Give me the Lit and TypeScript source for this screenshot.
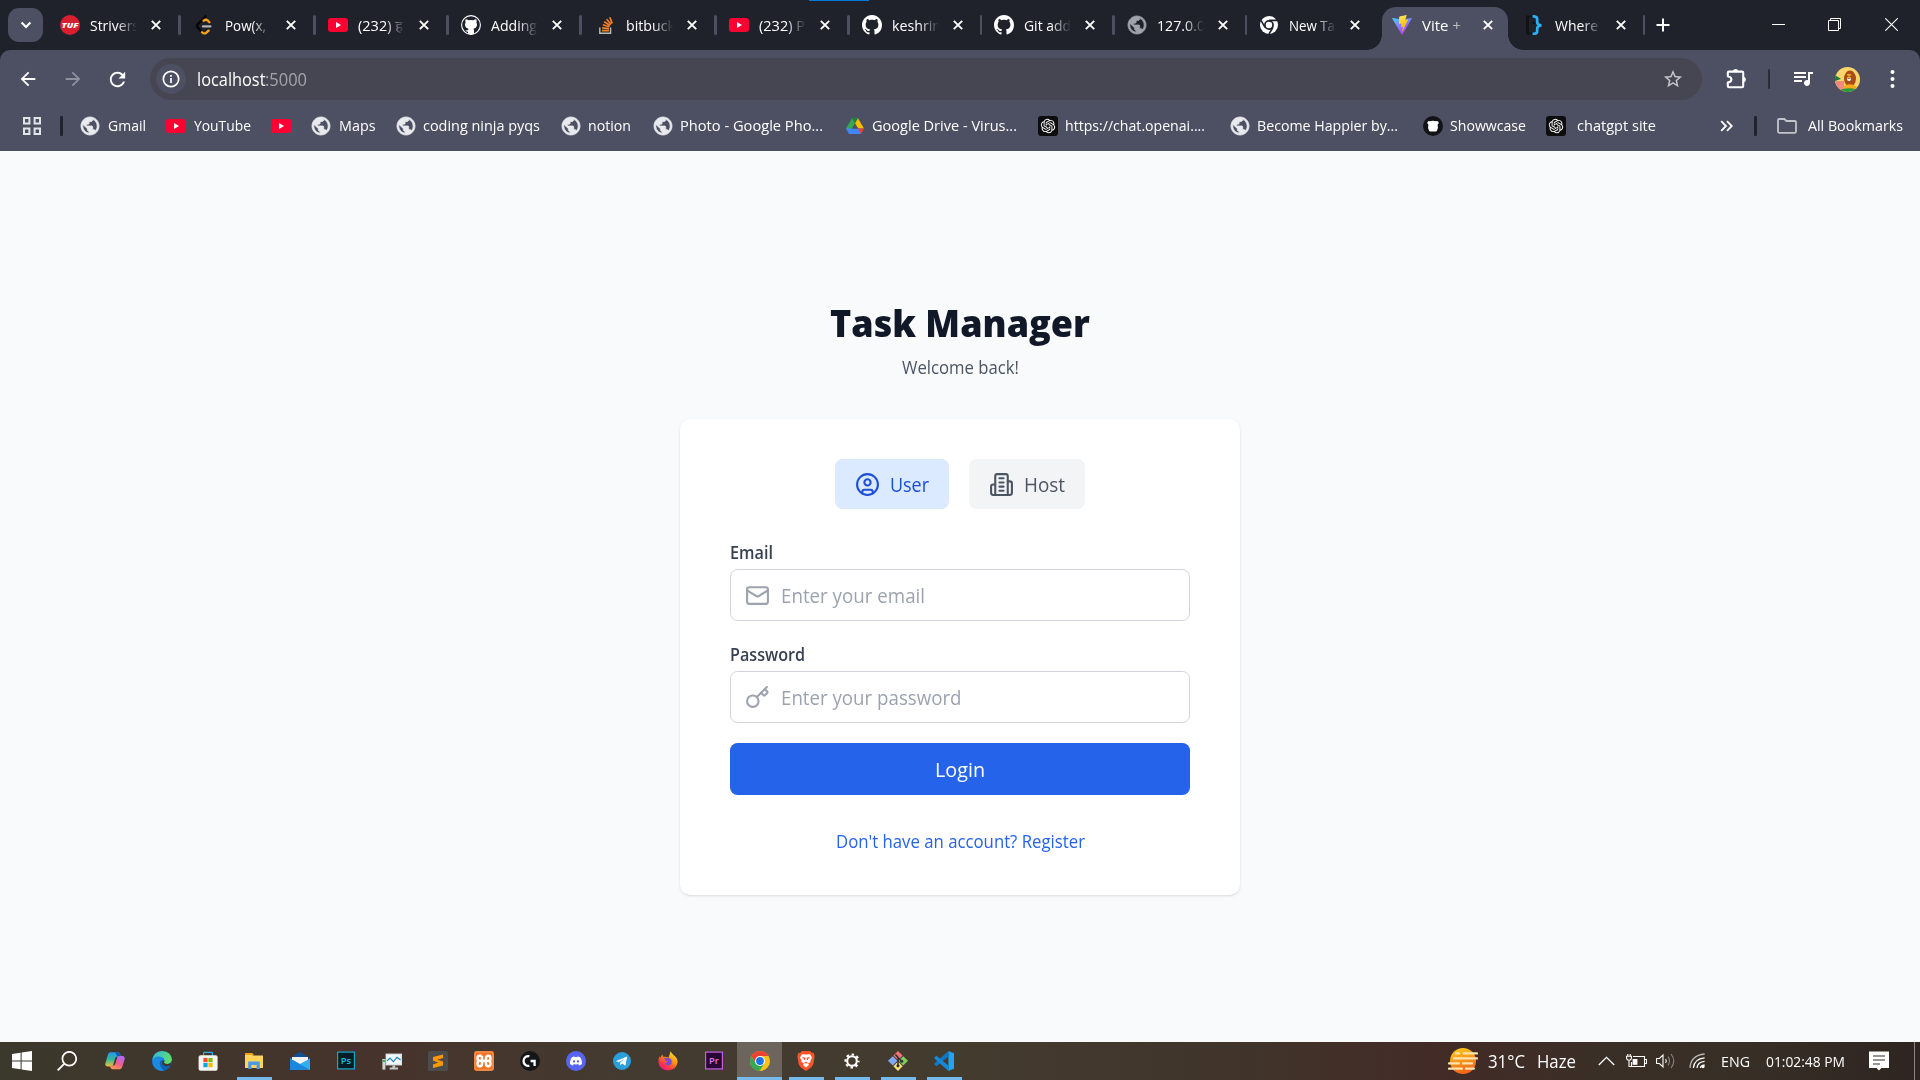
import { LitElement, html, svg, css, nothing } from "lit";
import { customElement, property, query } from "lit/decorators.js";
import { styleMap } from "lit/directives/style-map.js";
import { classMap } from "lit/directives/class-map.js";

/** One line of text condensed or widened to an exact advance width. */
@customElement("fit-text")
class FitText extends LitElement {
  @property({ type: Number }) w = 0;
  @property() text = "";
  @query("span") span!: HTMLSpanElement;

  static styles = css`
    :host { display: inline-block; white-space: pre; flex: none; }
    span { display: inline-block; transform-origin: 0 50%; }
  `;

  private fit() {
    this.span.style.transform = "none";
    const natural = this.span.getBoundingClientRect().width;
    if (natural > 0) this.span.style.transform = `scaleX(${this.w / natural})`;
  }

  updated() {
    this.style.width = `${this.w}px`;
    this.fit();
    document.fonts.ready.then(() => this.fit());
  }

  render() {
    return html`<span>${this.text}</span>`;
  }
}

const GITHUB = "M8 0C3.58 0 0 3.58 0 8c0 3.54 2.29 6.53 5.47 7.59.4.07.55-.17.55-.38 0-.19-.01-.82-.01-1.49-2.01.37-2.53-.49-2.69-.94-.09-.23-.48-.94-.82-1.13-.28-.15-.68-.52-.01-.53.63-.01 1.08.58 1.23.82.72 1.21 1.87.87 2.33.66.07-.52.28-.87.51-1.07-1.78-.2-3.64-.89-3.64-3.95 0-.87.31-1.59.82-2.15-.08-.2-.36-1.02.08-2.12 0 0 .67-.21 2.2.82.64-.18 1.32-.27 2-.27s1.36.09 2 .27c1.53-1.04 2.2-.82 2.2-.82.44 1.1.16 1.92.08 2.12.51.56.82 1.27.82 2.15 0 3.07-1.87 3.75-3.65 3.95.29.25.54.73.54 1.48 0 1.07-.01 1.93-.01 2.2 0 .21.15.46.55.38A8.01 8.01 0 0 0 16 8c0-4.42-3.58-8-8-8z";
const KNOT = "M22.2819 9.8211a5.9847 5.9847 0 0 0-.5157-4.9108 6.0462 6.0462 0 0 0-6.5098-2.9A6.0651 6.0651 0 0 0 4.9807 4.1818a5.9847 5.9847 0 0 0-3.9977 2.9 6.0462 6.0462 0 0 0 .7427 7.0966 5.98 5.98 0 0 0 .511 4.9107 6.051 6.051 0 0 0 6.5146 2.9001A5.9847 5.9847 0 0 0 13.2599 24a6.0557 6.0557 0 0 0 5.7718-4.2058 5.9894 5.9894 0 0 0 3.9977-2.9001 6.0557 6.0557 0 0 0-.7475-7.0729zm-9.022 12.6081a4.4755 4.4755 0 0 1-2.8764-1.0408l.1419-.0804 4.7783-2.7582a.7948.7948 0 0 0 .3927-.6813v-6.7369l2.02 1.1686a.071.071 0 0 1 .038.052v5.5826a4.504 4.504 0 0 1-4.4945 4.4944zm-9.6607-4.1254a4.4708 4.4708 0 0 1-.5346-3.0137l.142.0852 4.783 2.7582a.7712.7712 0 0 0 .7806 0l5.8428-3.3685v2.3324a.0804.0804 0 0 1-.0332.0615L9.74 19.9502a4.4992 4.4992 0 0 1-6.1408-1.6464zM2.3408 7.8956a4.485 4.485 0 0 1 2.3655-1.9728V11.6a.7664.7664 0 0 0 .3879.6765l5.8144 3.3543-2.0201 1.1685a.0757.0757 0 0 1-.071 0l-4.8303-2.7865A4.504 4.504 0 0 1 2.3408 7.872zm16.5963 3.8558L13.1038 8.364 15.1192 7.2a.0757.0757 0 0 1 .071 0l4.8303 2.7913a4.4944 4.4944 0 0 1-.6765 8.1042v-5.6772a.79.79 0 0 0-.407-.667zm2.0107-3.0231l-.142-.0852-4.7735-2.7818a.7759.7759 0 0 0-.7854 0L9.409 9.2297V6.8974a.0662.0662 0 0 1 .0284-.0615l4.8303-2.7866a4.4992 4.4992 0 0 1 6.6802 4.66zM8.3065 12.863l-2.02-1.1638a.0804.0804 0 0 1-.038-.0567V6.0742a4.4992 4.4992 0 0 1 7.3757-3.4537l-.142.0805L8.704 5.459a.7948.7948 0 0 0-.3927.6813zm1.0976-2.3654l2.602-1.4998 2.6069 1.4998v2.9994l-2.5974 1.4997-2.6067-1.4997Z";
const DISCORD = "M20.317 4.3698a19.7913 19.7913 0 00-4.8851-1.5152.0741.0741 0 00-.0785.0371c-.211.3753-.4447.8648-.6083 1.2495-1.8447-.2762-3.68-.2762-5.4868 0-.1636-.3933-.4058-.8742-.6177-1.2495a.077.077 0 00-.0785-.037 19.7363 19.7363 0 00-4.8852 1.515.0699.0699 0 00-.0321.0277C.5334 9.0458-.319 13.5799.0992 18.0578a.0824.0824 0 00.0312.0561c2.0528 1.5076 4.0413 2.4228 5.9929 3.0294a.0777.0777 0 00.0842-.0276c.4616-.6304.8731-1.2952 1.226-1.9942a.076.076 0 00-.0416-.1057c-.6528-.2476-1.2743-.5495-1.8722-.8923a.077.077 0 01-.0076-.1277c.1258-.0943.2517-.1923.3718-.2914a.0743.0743 0 01.0776-.0105c3.9278 1.7933 8.18 1.7933 12.0614 0a.0739.0739 0 01.0785.0095c.1202.099.246.1981.3728.2924a.077.077 0 01-.0066.1276 12.2986 12.2986 0 01-1.873.8914.0766.0766 0 00-.0407.1067c.3604.698.7719 1.3628 1.225 1.9932a.076.076 0 00.0842.0286c1.961-.6067 3.9495-1.5219 6.0023-3.0294a.077.077 0 00.0313-.0552c.5004-5.177-.8382-9.6739-3.5485-13.6604a.061.061 0 00-.0312-.0286zM8.02 15.3312c-1.1825 0-2.1569-1.0857-2.1569-2.419 0-1.3332.9555-2.4189 2.157-2.4189 1.2108 0 2.1757 1.0952 2.1568 2.419 0 1.3332-.9555 2.4189-2.1569 2.4189zm7.9748 0c-1.1825 0-2.1569-1.0857-2.1569-2.419 0-1.3332.9554-2.4189 2.1569-2.4189 1.2108 0 2.1757 1.0952 2.1568 2.419 0 1.3332-.946 2.4189-2.1568 2.4189Z";
const PUBLIC = "M12 2C6.48 2 2 6.48 2 12s4.48 10 10 10 10-4.48 10-10S17.52 2 12 2zm-1 17.93c-3.95-.49-7-3.85-7-7.93 0-.62.08-1.21.21-1.79L9 15v1c0 1.1.9 2 2 2v1.93zm6.9-2.54c-.26-.81-1-1.39-1.9-1.39h-1v-3c0-.55-.45-1-1-1H8v-2h2c.55 0 1-.45 1-1V7h2c1.1 0 2-.9 2-2v-.41c2.93 1.19 5 4.06 5 7.41 0 2.08-.8 3.97-2.1 5.39z";

/* The seas are cut out of the light disc: a lower-left bay and an S-shaped band. */
const globe = (disc: string, sea: string) => svg`
  <circle cx="10" cy="10" r="9" fill=${disc}/>
  <path d="M12.6 2.9V4.2Q12.4 5.4 11 5.4H9.6V7.2Q9.6 8.2 8.6 8.2H7V9.8H12Q13 9.8 13 10.8V12.8H14.4Q15.8 12.8 16.4 13.6Q17 12.6 17.2 11.2L14.6 11V9.4Q14.4 8.4 13.2 8.4H11.8V6.8H13.4Q14.8 6.6 14.8 5V3.9Q13.8 3.2 12.6 2.9Z" fill=${sea}/>
  <path d="M2.9 9.4Q2.4 12 4 14.2T9 17.2V15.6Q7.4 15.4 7.2 13.8V12.9L3.7 9.4Z" fill=${sea}/>`;

/* Every glyph is drawn on a 20 x 20 grid. */
const ICONS: Record<string, unknown> = {
  tuf: svg`<circle cx="10" cy="10" r="10" fill="#d81f30"/>
    <text x="10" y="12.6" text-anchor="middle" font-size="7" font-weight="800" font-style="italic" fill="#fff" textLength="17" lengthAdjust="spacingAndGlyphs">TUF</text>`,
  leet: svg`<g fill="none" stroke-width="2.3" stroke-linecap="round" stroke-linejoin="round">
    <path d="M10.6 1.2 2.6 9.4Q1.4 10.8 2.6 12.2L6 16.2" stroke="#060606"/>
    <path d="M8.6 5.8Q10.6 3.8 12.6 5.4L14.4 7.2M7 17.2Q8.8 19 10.8 18.2L13.6 15.6" stroke="#ffa116"/>
    <path d="M8 11.4H15.4" stroke="#b3b3b3"/></g>`,
  yt: svg`<rect y="3" width="20" height="14" rx="3" fill="#ff0033"/><path d="M8 7v6l5-3z" fill="#fff"/>`,
  cat: svg`<circle cx="10" cy="10" r="9.4" fill="#1f222b" stroke="#fff" stroke-width="1.1"/>
    <path d="M4.6 4.2Q6.4 4.2 7.6 5.2Q10 4.6 12.4 5.2Q13.6 4.2 15.4 4.2Q16 6 15.4 7.4Q16.4 9 15.8 11Q15 13.4 12.4 13.8Q13 14.6 13 15.8V18.9Q10 19.8 7 18.9V16.6Q5 16.9 4.2 15.2Q6 15.8 7.2 14.8L7.6 13.8Q5 13.4 4.2 11Q3.6 9 4.6 7.4Q4 6 4.6 4.2Z" fill="#fff"/>`,
  so: svg`<path d="M3.8 12.6v5.6h10.8v-5.6" fill="none" stroke="#bcbbbb" stroke-width="1.4"/>
    <g stroke="#f48024" stroke-width="1.7"><path d="M6 15.6h7M6.2 12.8l6.8.9M6.8 9.8l6.6 2M8.2 6.8l5.9 3.6M10.6 4.2l4.5 5.2M13.8 2.2l2.4 6.2"/></g>`,
  github: svg`<path transform="scale(1.25)" d=${GITHUB} fill="#fff"/>`,
  globeDim: svg`<path transform="translate(-.8 -.8) scale(.9)" d=${PUBLIC} fill="#9fa2ab" stroke="#9fa2ab" stroke-width=".9"/>`,
  globe: svg`<path transform="translate(-.8 -.8) scale(.9)" d=${PUBLIC} fill="#e8eaed" stroke="#e8eaed" stroke-width=".9"/>`,
  chromeMono: svg`<circle cx="10" cy="10" r="9" fill="#fff"/><circle cx="10" cy="10" r="4.1" fill="#fff" stroke="#1f222b" stroke-width="1.7"/>
    <path d="M10 5.4H18.2M6 12.4 2 5.4M14 12.4 9.9 19.2" stroke="#1f222b" stroke-width="1.6"/>`,
  vite: svg`<defs><linearGradient id="va" x1="0" y1="0" x2=".6" y2="1"><stop stop-color="#41d1ff"/><stop offset="1" stop-color="#bd34fe"/></linearGradient>
    <linearGradient id="vb" x1=".3" y1="0" x2=".6" y2="1"><stop stop-color="#ffea83"/><stop offset=".2" stop-color="#ffdd35"/><stop offset="1" stop-color="#ffa800"/></linearGradient></defs>
    <path d="M19.8 3.4 10.5 19.6q-.4.6-.8 0L.2 3.4q-.3-.6.4-.5l9.4 1.6 9.2-1.6q.8-.1.6.5z" fill="url(#va)"/>
    <path d="M14.4.1 7.6 1.4q-.3 0-.3.4l-.4 6.8q0 .5.4.4l1.9-.4q.5-.1.4.4l-.6 2.7q-.1.5.4.4l1.2-.4q.5-.1.4.4l-.9 4.2q0 .4.3.1L15.9 5q.2-.5-.3-.4l-2 .4q-.4 0-.3-.4L14.7.5q.1-.5-.3-.4z" fill="url(#vb)"/>`,
  brace: svg`<path d="M1 .5H6.6V2.6H4V17.4H6.6V19.5H1Z" fill="#111214"/><circle cx="8.6" cy="8" r="1.3" fill="#111214"/>
    <path d="M7.6 1.4H9.2Q12.2 1.6 12.2 4.4V7Q12.2 10 16.4 10.4Q12.2 10.8 12.2 13.6V16Q12.2 18.6 9.2 18.8H7.6" fill="none" stroke="#29b1f2" stroke-width="2.7"/>`,
  drive: svg`<path d="M7 2.2H13L10 7.4 4.2 17.4 1 12.4z" fill="#34a853"/><path d="M7 2.2H13L10 7.4z" fill="#188038"/>
    <path d="M10 7.4 13 2.2 19 12.6H13z" fill="#fbbc04"/>
    <path d="M1 12.6H14.8L16 18H4Z" fill="#4285f4"/><path d="M13 12.6H19L16 18z" fill="#ea4335"/><path d="M10 7.4 13 12.6H7z" fill="#4d5063"/>`,
  openai: svg`<rect width="20" height="20" rx="3" fill="#0d0d0d"/><path transform="translate(2.8 2.8) scale(.6)" d=${KNOT} fill="#fff"/>`,
  showw: svg`<circle cx="10" cy="10" r="10" fill="#111316"/><path d="M4.4 6.6Q4.6 4.6 6.8 5.2Q10 4.2 13.2 5.2Q15.4 4.6 15.6 6.6Q15.8 8 14.6 8.4Q15.6 12.6 14 14.6Q13.4 15.8 12.4 15.4H7.6Q6.6 15.8 6 14.6Q4.4 12.6 5.4 8.4Q4.2 8 4.4 6.6Z" fill="#fff"/>`,
  start: svg`<path d="M0 2.9 8.6 1.7V9.5H0ZM9.6 1.5 20 0V9.5H9.6ZM0 10.5H8.6V18.3L0 17.1ZM9.6 10.5H20V20L9.6 18.5Z" fill="#fff"/>`,
  search: svg`<circle cx="12.3" cy="7.7" r="6.9" fill="none" stroke="#fff" stroke-width="1.7"/><path d="M7.4 12.6.7 19.3" stroke="#fff" stroke-width="1.9"/>`,
  copilot: svg`<defs><linearGradient id="ca" x1="0" y1="0" x2="0" y2="1"><stop stop-color="#1f9be8"/><stop offset=".5" stop-color="#35b7a0"/><stop offset="1" stop-color="#f2c12e"/></linearGradient>
    <linearGradient id="cb" x1=".6" y1="0" x2=".2" y2="1"><stop stop-color="#b06bf0"/><stop offset=".5" stop-color="#ef5c90"/><stop offset="1" stop-color="#f59a4a"/></linearGradient></defs>
    <path d="M5 1.2H13Q14.6 1.2 15 2.8L15.8 5.4H12.4Q10.8 5.4 10.2 7L8 14.6Q7.4 15.6 6 15.6H2.6Q-.6 15.4.6 11.6L2.8 4Q3.4 1.4 5 1.2Z" fill="url(#ca)"/>
    <path d="M10 1.2H13Q14.6 1.2 15 2.8L15.8 5.4H12.4Z" fill="#1756c6"/>
    <path d="M15 18.2H7.6Q6 18.2 5.4 16.6L4.8 14.6H8Q9.6 14.6 10.2 13L12.4 5.8Q12.8 5 14 5H17.4Q20.6 5.2 19.4 9L17.2 16Q16.6 18 15 18.2Z" fill="url(#cb)"/>`,
  edge: svg`<defs><linearGradient id="ea" x1="0" y1="0" x2="1" y2=".4"><stop stop-color="#2fb4ea"/><stop offset="1" stop-color="#5fdc6b"/></linearGradient></defs>
    <circle cx="10" cy="10" r="10" fill="#0f63b5"/>
    <path d="M.2 9.2Q1.4.4 10 0Q19 .4 20 8.6Q19.8 12.6 15.4 13Q12 12.8 12 11.4Q13.4 9.6 11.4 7.6Q7.4 4.6.2 9.2Z" fill="url(#ea)"/>
    <path d="M.2 9.2Q3 5 7.6 5.6Q12 6.2 12.4 9.4Q9.6 7.6 8 10.6Q6.6 15.4 12 19.4Q4 21.4.6 13Z" fill="#1a8be0"/>
    <path d="M12.3 9.4Q9.4 10.4 10.4 13Q12.4 16.6 18.4 14.6Q18.9 14.4 18.6 15Q20 12 20 9Q19.6 13 15.4 13Q12.4 13 12 11.4Z" fill="#3d372f"/>`,
  store: svg`<path d="M5.6 5V2.2Q5.6 1.4 6.4 1.4H13.6Q14.4 1.4 14.4 2.2V5" fill="none" stroke="#29b3e6" stroke-width="1.2"/><rect x=".6" y="4.2" width="19" height="15.6" rx="2" fill="#f4f4f4"/>
    <path d="M5.4 7H9.6V11.2H5.4Z" fill="#f25022"/><path d="M10.4 7H14.6V11.2H10.4Z" fill="#7fba00"/><path d="M5.4 12H9.6V16.2H5.4Z" fill="#00a4ef"/><path d="M10.4 12H14.6V16.2H10.4Z" fill="#ffb900"/>`,
  files: svg`<path d="M1 2H8.4L10 4H1Z" fill="#e8a317"/><path d="M1 4H8L9.6 4.4H19V17H1Z" fill="#ffd45c"/><path d="M4.2 18V10.6H15.8V18H12.6V14H7.4V18Z" fill="#4a9ae6"/>`,
  mail: svg`<path d="M0 7.4 10 .6 20 7.4V10H0Z" fill="#0f4f96"/><path d="M2 6H18V13H2Z" fill="#f2f2f2"/><path d="M0 7.4 10 13 20 7.4V19H0Z" fill="#30aef3"/><path d="M0 7.4 20 19H0Z" fill="#1c86dd"/>`,
  ps: svg`<rect x="1.6" y="1.1" width="16.8" height="16.8" fill="#001d26" stroke="#14a9c4" stroke-width="1.2"/><text x="10" y="13" text-anchor="middle" font-size="9.4" font-weight="600" fill="#12c0e0">Ps</text>`,
  pr: svg`<rect x="1.6" y="1.1" width="16.8" height="16.8" fill="#2a0634" stroke="#c561dc" stroke-width="1.2"/><text x="10" y="12.6" text-anchor="middle" font-size="9.4" font-weight="600" fill="#dc78f5">Pr</text>`,
  monitor: svg`<path d="M.4 8H3.4V18.6H.4Z" fill="#cfd2d4"/><path d="M.6 9H3V11H.6Z" fill="#35b24a"/><path d="M3.6 2.6H20V14.4H3.6Z" fill="#dfe3e5"/><path d="M5 4H18.6V13H5Z" fill="#eef8fd"/><path d="M5 9.8 8 7 11.4 10.6 15 6.2 18.6 9" fill="none" stroke="#1c7fae" stroke-width="1.1"/><path d="M10.4 14.4H13.2V16.6H16V18.6H7.6V16.6H10.4Z" fill="#c3c7c9"/>`,
  sublime: svg`<rect width="20" height="20" rx="1.6" fill="#4b4c4b"/><path d="M15 3.4V7L9.4 8.8 15 10.6V14.4L5 17V13.4L10.4 11.6 5 9.8V6Z" fill="#ff9800"/>`,
  xampp: svg`<rect width="20" height="20" rx="2.4" fill="#ee7526"/><rect x="1" y="1" width="18" height="18" rx="1.6" fill="none" stroke="#f7a265" stroke-width=".8"/>
    <g fill="none" stroke="#fff" stroke-width="2.5" stroke-linejoin="round"><path d="M7.6 4.8H5.4Q3.6 4.8 3.6 6.8V7.8Q3.6 9.8 6 9.8Q3.6 9.8 3.6 12V13Q3.6 15.2 5.8 15.2Q8 15.2 8 13V11.6Q8 9.9 10 9.9T12 8.4V7Q12 4.8 14.2 4.8Q16.4 4.8 16.4 7V8Q16.4 9.8 14 9.8Q16.4 9.8 16.4 12V13Q16.4 15.2 14.2 15.2Q12 15.2 12 13V11.6Q12 9.9 10 9.9T8 8.4V4.8"/></g>`,
  ghub: svg`<circle cx="10" cy="10" r="10" fill="#151617"/><path d="M9.4 5.2A4.9 4.9 0 1 0 9.4 14.8M10.6 10H14.6V15" fill="none" stroke="#fff" stroke-width="2.3"/>`,
  discord: svg`<circle cx="10" cy="10" r="10" fill="#5865f2"/><path transform="translate(4 4) scale(.5)" d=${DISCORD} fill="#fff"/>`,
  telegram: svg`<circle cx="10" cy="10" r="9" fill="#2a9fd9"/><path d="M4 10 15.2 5.6 13.4 14.8 10.2 12.6 8.4 14.2 8 11.8 12.4 8 6.8 11.2Z" fill="#fff"/>`,
  firefox: svg`<defs><linearGradient id="fa" x1=".9" y1="0" x2=".2" y2="1"><stop stop-color="#fff14c"/><stop offset=".4" stop-color="#ff980e"/><stop offset=".75" stop-color="#ff3647"/><stop offset="1" stop-color="#e31587"/></linearGradient></defs>
    <path d="M12.6.2Q13.6 2.6 15.8 4.2Q19.6 6.8 19.6 11Q19 18.6 10.2 19.4Q1.2 19 .4 11Q.4 7 1.6 5.2L2.4 6.8Q3 4.6 4.4 3.4L5.2 5.8Q8 5.4 10.6 6.4Q11.6 3.4 12.6.2Z" fill="url(#fa)"/>
    <path d="M6 7.4Q10 5.8 12.8 8Q14.6 10 13.6 12.4Q12 15 9 14.2Q6.6 13.2 6.6 11.6Q9 12.2 10 10.6Q7.6 10.4 6 7.4Z" fill="#7a49d8"/>`,
  chrome: svg`<circle cx="10" cy="10" r="10" fill="#fbc116"/><path d="M1.34 5A10 10 0 0 1 18.66 5H10L5.7 12.5Z" fill="#ea4335"/><path d="M1.34 5 5.67 12.5 10 15 9.6 20A10 10 0 0 1 1.34 5Z" fill="#34a853"/><path d="M9.6 20 14.33 12.5 10 14.6Z" fill="#34a853"/><circle cx="10" cy="10" r="5" fill="#fff"/><circle cx="10" cy="10" r="3.9" fill="#1a73e8"/>`,
  brave: svg`<path d="M6 0H14L16 2 17.6 1.8 18.6 5 17.4 13 15.4 16.2 10 20 4.6 16.2 2.6 13 1.4 5 2.4 1.8 4 2Z" fill="#fb542b"/><path d="M10 3.4 14 3.2 16 6.4 14.4 9.4 14.6 11 12 12.4 13 14 10 16.4 7 14 8 12.4 5.4 11 5.6 9.4 4 6.4 6 3.2Z" fill="#fff"/><path d="M6.4 6.6 8.8 7.2 8.4 9M13.6 6.6 11.2 7.2 11.6 9M8.6 12.2 10 11.2 11.4 12.2" fill="none" stroke="#fb542b" stroke-width="1.2"/>`,
  gear: svg`<circle cx="10" cy="10" r="4.8" fill="none" stroke="#fff" stroke-width="2.1"/><circle cx="10" cy="10" r="6.5" fill="none" stroke="#fff" stroke-width="2.2" stroke-dasharray="2.5 2.605" stroke-dashoffset="1.25"/>`,
  gitbash: svg`<path d="M10 0 14.6 4.6 10 9.2 5.4 4.6Z" fill="#f17474"/><path d="M4.8 5.2 9.4 9.8 4.8 14.6 0 9.8Z" fill="#7fa9f5"/><path d="M15.2 5.2 20 9.8 15.2 14.6 10.6 9.8Z" fill="#7ed05b"/><path d="M10 10.6 14.6 15.2 10 20 5.4 15.2Z" fill="#fde17b"/><path d="M7.4 3.4 10 6.4V15M10.4 7 13.4 10" fill="none" stroke="#33302b" stroke-width="1.5"/><circle cx="10" cy="14.8" r="1.6" fill="#33302b"/><circle cx="13.8" cy="10.2" r="1.5" fill="#33302b"/>`,
  vscode: svg`<path d="M14.4 0 20 2.2V17.8L14.4 20Z" fill="#24a3ee"/><path d="M14.4 0V5.6L2.4 15.2.4 13.6V12.6Z" fill="#0b79c6"/><path d="M.4 7.4V6.4L2.4 4.8 14.4 14.4V20Z" fill="#1389d8"/>`,
};

const icon = (name: string, size = 20) =>
  html`<svg class="ico" width=${size} height=${size} viewBox="0 0 20 20">${ICONS[name]}</svg>`;

const TABS: { icon: string; title: string; w: number; slot: number; active?: boolean; line: boolean }[] = [
  { icon: "tuf", title: "Strivers", w: 49, slot: 135, line: true },
  { icon: "leet", title: "Pow(x,", w: 41, slot: 133, line: true },
  { icon: "yt", title: "(232) ह", w: 45, slot: 133, line: true },
  { icon: "cat", title: "Adding", w: 46, slot: 134.5, line: true },
  { icon: "so", title: "bitbuck", w: 49, slot: 133.5, line: true },
  { icon: "yt", title: "(232) P", w: 46, slot: 132.5, line: true },
  { icon: "github", title: "keshrin", w: 49, slot: 132.5, line: true },
  { icon: "github", title: "Git add", w: 47, slot: 132.5, line: true },
  { icon: "globeDim", title: "127.0.0", w: 48, slot: 132.5, line: true },
  { icon: "chromeMono", title: "New Ta", w: 46, slot: 132.5, line: false },
  { icon: "vite", title: "Vite +", w: 39, slot: 133.5, active: true, line: false },
  { icon: "brace", title: "Where", w: 43, slot: 132, line: true },
];

const BOOKMARKS: { icon: string; label?: string; w?: number; box?: number; lead?: boolean }[] = [
  { icon: "globe", label: "Gmail", w: 38, box: 38 },
  { icon: "yt", label: "YouTube", w: 57, box: 57 },
  { icon: "yt" },
  { icon: "globe", label: "Maps", w: 36.5, box: 36.5 },
  { icon: "globe", label: "coding ninja pyqs", w: 117, box: 117 },
  { icon: "globe", label: "notion", w: 43, box: 44 },
  { icon: "globe", label: "Photo - Google Pho...", w: 143, box: 144 },
  { icon: "drive", label: "Google Drive - Virus...", w: 145, box: 145 },
  { icon: "openai", label: "https://chat.openai....", w: 140, box: 144 },
  { icon: "globe", label: "Become Happier by...", w: 141, box: 145 },
  { icon: "showw", label: "Showwcase", w: 76, box: 75 },
  { icon: "openai", label: "chatgpt site", w: 79, box: 79, lead: true },
];

const APPS: { icon: string; state?: "open" | "current" }[] = [
  { icon: "edge" }, { icon: "store" }, { icon: "files", state: "open" }, { icon: "mail" }, { icon: "ps" },
  { icon: "monitor" }, { icon: "sublime" }, { icon: "xampp" }, { icon: "ghub" }, { icon: "discord" },
  { icon: "telegram" }, { icon: "firefox" }, { icon: "pr" }, { icon: "chrome", state: "current" },
  { icon: "brave", state: "open" }, { icon: "gear", state: "open" }, { icon: "gitbash", state: "open" }, { icon: "vscode", state: "open" },
];

const line = (body: unknown) => html`
  <svg width="25" height="25" viewBox="0 0 24 24" fill="none" stroke="currentColor" stroke-width="2" stroke-linecap="round" stroke-linejoin="round">${body}</svg>`;

const USER = svg`<circle cx="12" cy="12" r="10"/><circle cx="12" cy="10" r="3"/><path d="M7 20.662V19a2 2 0 0 1 2-2h6a2 2 0 0 1 2 2v1.662"/>`;
const BUILDING = svg`<path d="M6 22V4a2 2 0 0 1 2-2h8a2 2 0 0 1 2 2v18Z"/><path d="M6 12H4a2 2 0 0 0-2 2v6a2 2 0 0 0 2 2h2"/><path d="M18 9h2a2 2 0 0 1 2 2v9a2 2 0 0 1-2 2h-2"/><path d="M10 6h4M10 10h4M10 14h4M10 18h4"/>`;
const ENVELOPE = svg`<rect width="20" height="16" x="2" y="4" rx="2"/><path d="m22 7-8.97 5.7a1.94 1.94 0 0 1-2.06 0L2 7"/>`;
const KEY = svg`<path d="m15.5 7.5 2.3 2.3a1 1 0 0 0 1.4 0l2.1-2.1a1 1 0 0 0 0-1.4L19 4"/><path d="m21 2-9.6 9.6"/><circle cx="7.5" cy="15.5" r="5.5"/>`;

@customElement("app-root")
class AppRoot extends LitElement {
  static styles = css`
    :host { display: flex; flex-direction: column; width: 1920px; height: 1080px; overflow: hidden; background: #f9fafb;
      font-family: "Open Sans", "Noto Sans", sans-serif; color: #fff; }
    * { box-sizing: border-box; }
    svg { display: block; flex: none; }

    .strip { position: relative; display: flex; height: 50px; background: #1f222b; padding-left: 8px; }
    .progress { position: absolute; left: 809px; top: 0; width: 60px; height: 1px; background: #0078d7; }
    .search-tabs { width: 35px; height: 34px; margin: 8px 5px 0 0; border-radius: 11px; background: #4d5063; display: grid; place-items: center; }
    .tab { display: flex; align-items: center; height: 50px; padding-left: 12px; flex: none; position: relative; font-size: 15px; line-height: 24px; }
    .title { width: 50px; margin: 0 0 1px 10px; overflow: hidden; white-space: nowrap; height: 24px; flex: none;
      -webkit-mask-image: linear-gradient(90deg, #000 54%, transparent 94%); mask-image: linear-gradient(90deg, #000 54%, transparent 94%); }
    .tab .x { margin-left: 11px; z-index: 1; }
    .tab .ico, .title { z-index: 1; }
    .rule { width: 3px; height: 20px; border-radius: 2px; background: #4d5063; margin-left: 17px; }
    .active::before { content: ""; position: absolute; left: 2px; top: 7px; width: 126px; height: 43px; border-radius: 14px 14px 0 0; background: #4d5063; }
    .active .flare { position: absolute; bottom: 0; width: 15px; height: 15px; }
    .flare.l { left: -13px; background: radial-gradient(circle at 0 0, transparent 14.5px, #4d5063 15px); }
    .flare.r { left: 128px; background: radial-gradient(circle at 100% 0, transparent 14.5px, #4d5063 15px); }
    .plus { margin: 18px 0 0 11px; }
    .controls { display: flex; margin: 18px 22px 0 auto; gap: 43px; }

    .chrome { height: 101px; background: #4d5063; border-radius: 10px 10px 0 0; display: flex; flex-direction: column; }
    .behind { background: #1f222b; flex: none; }
    .bar { display: flex; align-items: center; height: 58px; padding-left: 5px; }
    .nav { width: 45px; display: grid; place-items: center; }
    .url { margin-left: 10px; width: 1552px; height: 42px; border-radius: 21px; background: #454651; display: flex; align-items: center; padding: 0 19px 0 6px; font-size: 17.5px; line-height: 26px; }
    .info { width: 30px; height: 30px; border-radius: 50%; background: #4d5063; display: grid; place-items: center; margin-right: 10.5px; }
    .port { color: #a3a4ac; }
    .star { margin-left: auto; }
    .puzzle { margin: 0 21px 0 23px; }
    .vr { width: 2px; height: 20px; background: #2a2c37; border-radius: 1px; }
    .queue { margin-left: 20.5px; }
    .avatar { margin: 0 20px 0 20px; }

    .marks { display: flex; align-items: center; height: 35px; padding-left: 23px; font-size: 14.6px; line-height: 22px; }
    .marks .vr { width: 3px; background: #22242d; margin: 0 17px 0 19px; }
    .list { display: flex; gap: 20px; }
    .mark { display: flex; align-items: center; gap: 8px; }
    .mark fit-text, .all fit-text { position: relative; top: -1px; left: -.5px; }
    .lead { margin-left: 4px; }
    .more { margin-left: auto; }
    .marks .end { margin: 0 20px 0 21px; }
    .all { margin: 0 17px 0 11px; }

    .page { flex: 1; display: flex; flex-direction: column; align-items: center; padding-top: 149px; background: #f9fafb; color: #111827; }
    .brand { margin: 0; font-size: 37.5px; line-height: 45px; font-weight: 800; color: #111827; height: 45px; }
    .welcome { margin: 10px 0 0; font-size: 17.5px; line-height: 25px; height: 25px; color: #4b5563; }
    .card { width: 560px; height: 476px; margin-top: 39px; border-radius: 10px; background: #fff; padding: 40px 50px; display: flex; flex-direction: column;
      box-shadow: 0 1px 3px rgba(0,0,0,.1), 0 1px 2px -1px rgba(0,0,0,.1); }
    .roles { display: flex; justify-content: center; gap: 20px; margin-bottom: 30px; }
    .role { height: 50px; border-radius: 7.5px; padding: 0 20px; display: flex; align-items: center; gap: 10px; font: inherit; font-size: 20px; line-height: 30px; border: 0; background: #f3f4f6; color: #4b5563; }
    .role.on { background: #dbeafe; color: #1d4ed8; }
    .role fit-text, .field fit-text, .login fit-text { padding-top: 2px; }
    .label { font-size: 17.5px; line-height: 25px; height: 25px; font-weight: 600; color: #374151; margin-bottom: 5px; padding-top: 1px; }
    .field { height: 52px; border: 1px solid #d1d5db; border-radius: 7.5px; display: flex; align-items: center; padding-left: 14px; gap: 11px; font-size: 20px; line-height: 30px; color: #9ca3af; margin-bottom: 20px; }
    .login { height: 52px; border: 0; border-radius: 7.5px; background: #2563eb; color: #fff; font: inherit; font-size: 20px; line-height: 30px; display: grid; place-items: center; padding: 0; }
    .register { margin-top: 34px; align-self: center; font-size: 17.5px; line-height: 25px; color: #2563eb; height: 25px; }

    .taskbar { height: 38px; display: flex; align-items: stretch; flex: none;
      background: linear-gradient(90deg, #3b382c 0, #3f372c 130px, #46332c 370px, #45372d 500px, #443b30 640px, #443b2f 960px, #40342a 1250px, #432b27 1440px, #3a2f26 1600px, #372e26 1750px, #2e2522 1920px); }
    .app { width: 46px; display: grid; place-items: center; position: relative; flex: none; }
    .app.first { width: 44px; }
    .app.pin { width: 50px; margin-right: -1px; }
    .app.current { background: #6b655d; width: 45px; margin-right: 1px; }
    .app.open::after, .app.current::after { content: ""; position: absolute; left: 6px; right: 5px; bottom: 0; height: 3px; background: #76b9ed; }
    .app.current::after { left: 0; right: 0; }
    .tray { margin-left: auto; display: flex; align-items: center; font-size: 18px; line-height: 26px; }
    .tray .small { font-size: 15.2px; margin-left: 16px; }
    .deg { margin: 0 12px 0 10px; }
    .tray .up { margin-left: 22px; }
    .tray .bat { margin-left: 11px; }
    .tray .vol { margin-left: 9px; }
    .tray .wifi { margin-left: 13px; }
    .tray .eng { margin-left: 15px; }
    .note { margin: 0 25px 0 24px; }
    .desk { width: 1px; height: 38px; background: #8c8783; margin-right: 5px; }
  `;

  private tab(t: (typeof TABS)[number]) {
    return html`<div class=${classMap({ tab: true, active: !!t.active })} style=${styleMap({ width: `${t.slot}px` })}>
      ${t.active ? html`<i class="flare l"></i><i class="flare r"></i>` : nothing}
      ${icon(t.icon)}
      <div class="title"><fit-text .w=${t.w} text=${t.title}></fit-text></div>
      <svg class="x" width="10" height="10" viewBox="0 0 10 10"><path d="M.8.8 9.2 9.2M9.2.8.8 9.2" stroke="#fff" stroke-width="1.9"/></svg>
      ${t.line ? html`<i class="rule"></i>` : nothing}
    </div>`;
  }

  private mark(b: (typeof BOOKMARKS)[number]) {
    return html`<div class="mark">${icon(b.icon)}
      ${b.label
        ? html`<div class=${classMap({ lead: !!b.lead })} style=${styleMap({ width: `${b.box}px` })}><fit-text .w=${b.w} text=${b.label}></fit-text></div>`
        : nothing}</div>`;
  }

  render() {
    return html`
      <div class="strip">
        <div class="progress"></div>
        <div class="search-tabs"><svg width="12" height="12" viewBox="0 0 12 12"><path d="M1.6 3.6 6 8 10.4 3.6" fill="none" stroke="#fff" stroke-width="2.1"/></svg></div>
        ${TABS.map((t) => this.tab(t))}
        <svg class="plus" width="14" height="14" viewBox="0 0 14 14"><path d="M7 .5V13.5M.5 7H13.5" stroke="#fff" stroke-width="2"/></svg>
        <div class="controls">
          <svg width="13" height="13" viewBox="0 0 13 13"><path d="M0 6.5H13" stroke="#fff"/></svg>
          <svg width="14" height="13" viewBox="0 0 14 13"><path d="M.5 2.5H10.5V12.5H.5ZM2.5 2.5V.5H12.5V10.5H10.5" fill="none" stroke="#fff"/></svg>
          <svg width="13" height="13" viewBox="0 0 13 13"><path d="M.3.3 12.7 12.7M12.7.3.3 12.7" stroke="#fff" stroke-width="1.1"/></svg>
        </div>
      </div>

      <div class="behind"><div class="chrome">
        <div class="bar">
          <div class="nav"><svg width="22" height="22" viewBox="0 0 24 24"><path d="M20 11H7.83l5.59-5.59L12 4l-8 8 8 8 1.41-1.41L7.83 13H20v-2z" fill="#fff"/></svg></div>
          <div class="nav"><svg width="22" height="22" viewBox="0 0 24 24"><path d="M4 11H16.17l-5.59-5.59L12 4l8 8-8 8-1.41-1.41L16.17 13H4v-2z" fill="#8e909d"/></svg></div>
          <div class="nav"><svg width="23" height="23" viewBox="0 0 24 24"><path d="M17.65 6.35C16.2 4.9 14.21 4 12 4c-4.42 0-7.99 3.58-7.99 8s3.57 8 7.99 8c3.73 0 6.84-2.55 7.73-6h-2.08c-.82 2.33-3.04 4-5.65 4-3.31 0-6-2.69-6-6s2.69-6 6-6c1.66 0 3.14.69 4.22 1.78L13 11h7V4l-2.35 2.35z" fill="#fff"/></svg></div>
          <div class="url">
            <div class="info"><svg width="18" height="18" viewBox="0 0 18 18"><circle cx="9" cy="9" r="7.7" fill="none" stroke="#fff" stroke-width="1.7"/><path d="M9 8V13M9 5V6.8" stroke="#fff" stroke-width="1.7"/></svg></div>
            <fit-text .w=${68.5} text="localhost"></fit-text><fit-text class="port" .w=${42} text=":5000"></fit-text>
            <svg class="star" width="20" height="20" viewBox="1 1 22 22"><path d="M22 9.24l-7.19-.62L12 2 9.19 8.63 2 9.24l5.46 4.73L5.82 21 12 17.27 18.18 21l-1.63-7.03L22 9.24zM12 15.4l-3.76 2.27 1-4.28-3.32-2.88 4.38-.38L12 6.1l1.71 4.04 4.38.38-3.32 2.88 1 4.28L12 15.4z" fill="#c6c7cc"/></svg>
          </div>
          <svg class="puzzle" width="22" height="22" viewBox="0 0 22 22"><path d="M4 3.6H17Q18.2 3.6 18.2 4.8V18Q18.2 19.2 17 19.2H4Q2.8 19.2 2.8 18V14.6Q6.4 13.8 6.4 11.4T2.8 8.2V4.8Q2.8 3.6 4 3.6Z" fill="none" stroke="#fff" stroke-width="2.1" stroke-linejoin="round"/><path d="M8 3.6A2.6 2.6 0 0 1 13.2 3.6ZM18.2 8.8A2.6 2.6 0 0 1 18.2 14Z" fill="#fff"/></svg>
          <div class="vr"></div>
          <svg class="queue" width="24" height="24" viewBox="0 0 24 24"><path d="M15 5H3v2h12V5zm0 4H3v2h12V9zM3 15h8v-2H3v2zM17 5v8.18c-.31-.11-.65-.18-1-.18-1.66 0-3 1.34-3 3s1.34 3 3 3 3-1.34 3-3V7h3V5h-5z" fill="#fff"/></svg>
          <svg class="avatar" width="25" height="25" viewBox="0 0 25 25"><defs><clipPath id="av"><circle cx="12.5" cy="12.5" r="12.5"/></clipPath></defs>
            <g clip-path="url(#av)"><path d="M0 0H25V25H0Z" fill="#fcd56b"/><path d="M0 14H9V25H0Z" fill="#f08a80"/><path d="M0 8 6 12 0 14Z" fill="#1c7a3c"/>
            <ellipse cx="15" cy="11.6" rx="6" ry="8" fill="#a94d17"/><path d="M9 19Q15 15.4 21.6 19.4V23H9Z" fill="#f2a91e"/><path d="M5 23Q12 20 22 22.4V25H5Z" fill="#2a9a3f"/>
            <path d="M11.8 7.6Q14 6 16.2 7.6L15.8 12Q14 14.6 12.2 12Z" fill="#f3a528"/><ellipse cx="14" cy="12.4" rx="1.8" ry="1.5" fill="#fff"/><circle cx="12.8" cy="9.2" r=".6" fill="#3a1c08"/><circle cx="15.2" cy="9.2" r=".6" fill="#3a1c08"/><path d="M13.1 11H14.9L14 12.2Z" fill="#3a1c08"/></g></svg>
          <svg width="24" height="24" viewBox="0 0 24 24"><g fill="#fff"><circle cx="12.5" cy="5" r="2"/><circle cx="12.5" cy="12" r="2"/><circle cx="12.5" cy="19" r="2"/></g></svg>
        </div>
        <div class="marks">
          <svg width="18" height="18" viewBox="0 0 18 18"><path d="M1 1H6.4V6.4H1ZM11.6 1H17V6.4H11.6ZM1 11.6H6.4V17H1ZM11.6 11.6H17V17H11.6Z" fill="none" stroke="#e3e4e8" stroke-width="2"/></svg>
          <div class="vr"></div>
          <div class="list">${BOOKMARKS.map((b) => this.mark(b))}</div>
          <svg class="more" width="13" height="12" viewBox="0 0 13 12"><path d="M1.2 1.2 6 6 1.2 10.8M7 1.2 11.8 6 7 10.8" fill="none" stroke="#fff" stroke-width="1.8"/></svg>
          <div class="vr end"></div>
          <svg width="20" height="16" viewBox="0 0 20 16"><path d="M2.2 1H7.4L9.4 3H17.8Q19 3 19 4.2V13.6Q19 14.8 17.8 14.8H2.2Q1 14.8 1 13.6V2.2Q1 1 2.2 1Z" fill="none" stroke="#c3c4ca" stroke-width="1.8"/></svg>
          <div class="all"><fit-text .w=${95} text="All Bookmarks"></fit-text></div>
        </div>
      </div></div>

      <main class="page">
        <h1 class="brand"><fit-text .w=${260} text="Task Manager"></fit-text></h1>
        <p class="welcome"><fit-text .w=${117} text="Welcome back!"></fit-text></p>
        <section class="card">
          <div class="roles">
            <button class="role on">${line(USER)}<fit-text .w=${39} text="User"></fit-text></button>
            <button class="role">${line(BUILDING)}<fit-text .w=${41} text="Host"></fit-text></button>
          </div>
          <div class="label"><fit-text .w=${43} text="Email"></fit-text></div>
          <div class="field">${line(ENVELOPE)}<fit-text .w=${144} text="Enter your email"></fit-text></div>
          <div class="label"><fit-text .w=${75} text="Password"></fit-text></div>
          <div class="field">${line(KEY)}<fit-text .w=${180.5} text="Enter your password"></fit-text></div>
          <button class="login"><fit-text .w=${50} text="Login"></fit-text></button>
          <a class="register"><fit-text .w=${249} text="Don't have an account? Register"></fit-text></a>
        </section>
      </main>

      <footer class="taskbar">
        <div class="app first">${icon("start")}</div>
        <div class="app">${icon("search")}</div>
        <div class="app pin">${icon("copilot")}</div>
        ${APPS.map((a) => html`<div class=${classMap({ app: true, open: a.state === "open", current: a.state === "current" })}>${icon(a.icon)}</div>`)}
        <div class="tray">
          <svg width="30" height="26" viewBox="0 0 30 26"><defs><linearGradient id="sun" x1="0" y1="0" x2=".3" y2="1"><stop stop-color="#ffcf1a"/><stop offset="1" stop-color="#f0681a"/></linearGradient></defs>
            <circle cx="15" cy="13" r="13" fill="url(#sun)"/><g stroke="#fbe3ae" stroke-width="2.2" stroke-linecap="round"><path d="M8 5.4H11M15.6 5.4H29M6 10.4H19M18 10.4H29M1 15.4H11M15 15.4H24M1 20.6H14M18 20.6H26"/></g></svg>
          <fit-text class="deg" .w=${37} text="31°C"></fit-text>
          <fit-text .w=${39} text="Haze"></fit-text>
          <svg class="up" width="17" height="10" viewBox="0 0 17 10"><path d="M.8 9 8.5 1.3 16.2 9" fill="none" stroke="#fff" stroke-width="1.3"/></svg>
          <svg class="bat" width="21" height="16" viewBox="0 0 21 16"><path d="M7 3.5H18.5V13.5H5.5V9M18.5 6.5H20.5V10.5H18.5" fill="none" stroke="#fff" stroke-width="1.1"/><path d="M6.6 6H11.4V11.8H6.6Z" fill="#fff"/><path d="M.6 3.2H5.4V5.4Q5.2 7.2 3 7.2T.6 5.4ZM1.8 1V3M4.2 1V3M3 7V13.5H5.5" fill="none" stroke="#fff" stroke-width="1.1"/></svg>
          <svg class="vol" width="20" height="16" viewBox="0 0 20 16"><path d="M.6 5.5H3.4L7 2V14L3.4 10.5H.6Z" fill="none" stroke="#fff" stroke-width="1.1"/><path d="M9.6 6Q11 8 9.6 10" fill="none" stroke="#fff" stroke-width="1.1"/><path d="M12 3.6Q15 8 12 12.4M15 1Q20.6 8 15 15" fill="none" stroke="#8b857e" stroke-width="1.1"/></svg>
          <svg class="wifi" width="17" height="16" viewBox="0 0 17 16"><g fill="none" stroke="#fff" stroke-width="1.3"><path d="M1 15Q1.6 2.4 15.6 1" stroke="#b8b4b0"/><path d="M4.4 15Q5 5.8 15.6 4.8"/><path d="M8 15Q8.6 9 15.6 8.4"/><path d="M11.4 15Q11.6 12.4 15.6 12"/></g><circle cx="14" cy="13.6" r="1.6" fill="#fff"/></svg>
          <fit-text class="small eng" .w=${29} text="ENG"></fit-text>
          <fit-text class="small" .w=${79} text="01:02:48 PM"></fit-text>
          <svg class="note" width="20" height="20" viewBox="0 0 20 20"><path d="M0 .5H20V17H12.4L10 19.6 7.6 17H0Z" fill="#fff"/><path d="M4 5H16M4 9H16M4 13H11" stroke="#332a25" stroke-width="1.2"/></svg>
          <i class="desk"></i>
        </div>
      </footer>
    `;
  }
}
